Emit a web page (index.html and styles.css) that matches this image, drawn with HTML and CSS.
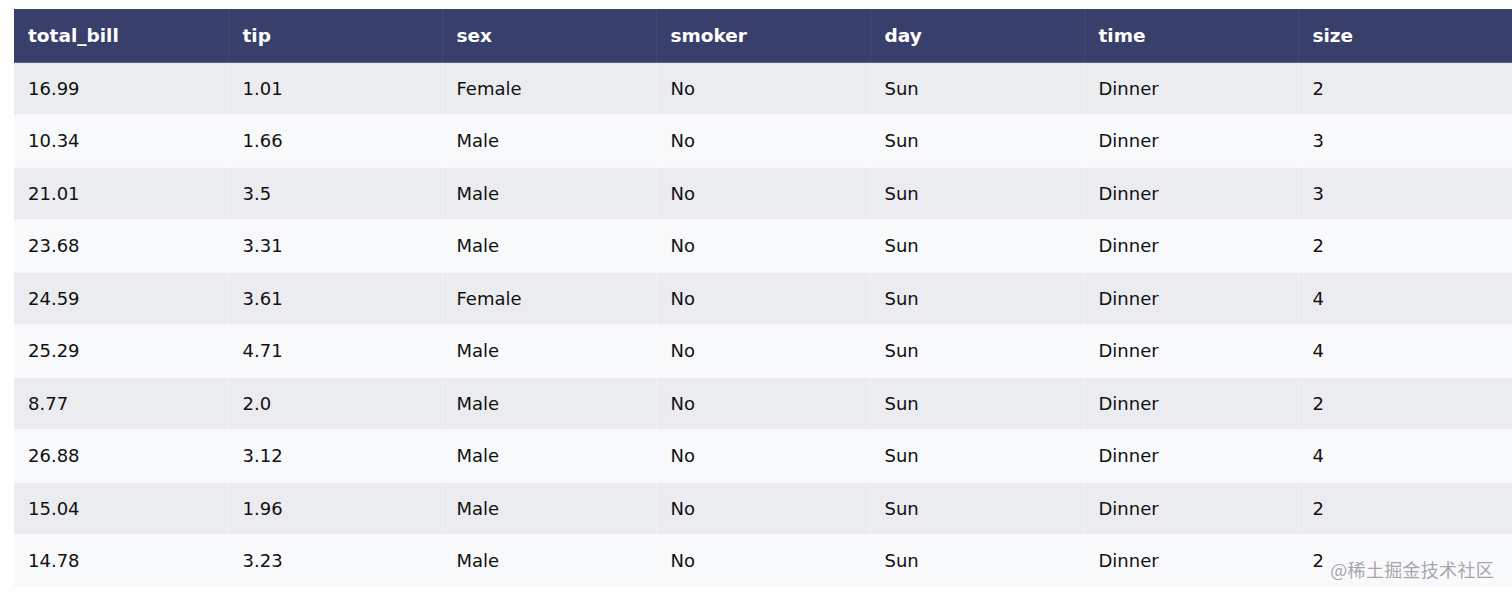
FILE: index.html
```html
<!DOCTYPE html>
<html>
<head>
<meta charset="utf-8">
<link rel="stylesheet" href="styles.css">
</head>
<body>
<div class="wrap">
<table class="data">
<thead>
<tr><th>total_bill</th><th>tip</th><th>sex</th><th>smoker</th><th>day</th><th>time</th><th>size</th></tr>
</thead>
<tbody>
<tr><td>16.99</td><td>1.01</td><td>Female</td><td>No</td><td>Sun</td><td>Dinner</td><td>2</td></tr>
<tr><td>10.34</td><td>1.66</td><td>Male</td><td>No</td><td>Sun</td><td>Dinner</td><td>3</td></tr>
<tr><td>21.01</td><td>3.5</td><td>Male</td><td>No</td><td>Sun</td><td>Dinner</td><td>3</td></tr>
<tr><td>23.68</td><td>3.31</td><td>Male</td><td>No</td><td>Sun</td><td>Dinner</td><td>2</td></tr>
<tr><td>24.59</td><td>3.61</td><td>Female</td><td>No</td><td>Sun</td><td>Dinner</td><td>4</td></tr>
<tr><td>25.29</td><td>4.71</td><td>Male</td><td>No</td><td>Sun</td><td>Dinner</td><td>4</td></tr>
<tr><td>8.77</td><td>2.0</td><td>Male</td><td>No</td><td>Sun</td><td>Dinner</td><td>2</td></tr>
<tr><td>26.88</td><td>3.12</td><td>Male</td><td>No</td><td>Sun</td><td>Dinner</td><td>4</td></tr>
<tr><td>15.04</td><td>1.96</td><td>Male</td><td>No</td><td>Sun</td><td>Dinner</td><td>2</td></tr>
<tr><td>14.78</td><td>3.23</td><td>Male</td><td>No</td><td>Sun</td><td>Dinner</td><td>2</td></tr>
</tbody>
</table>
<div class="watermark">@稀土掘金技术社区</div>
</div>
</body>
</html>
```
FILE: styles.css
```css
html, body {
  margin: 0;
  padding: 0;
  background: #ffffff;
  overflow: hidden;
}
body {
  padding: 9px 0 0 14px;
  font-family: "DejaVu Sans", Verdana, sans-serif;
}
.wrap {
  position: relative;
  width: 1498px;
}
.data {
  width: 1498px;
  border-collapse: collapse;
  table-layout: fixed;
}
.data th, .data td {
  text-align: left;
  padding: 0 14px;
  width: 214px;
  box-sizing: border-box;
  border-right: 1px solid rgba(255, 255, 255, 0.3);
}
.data th {
  background: #383f6b;
  color: #ffffff;
  font-weight: bold;
  font-size: 18.5px;
  height: 53px;
  border-right-color: rgba(255, 255, 255, 0.06);
  border-bottom: 1px solid #59608a;
}
.data td {
  font-size: 18px;
  color: #111111;
  height: 52.5px;
  border-bottom: 1px solid rgba(255, 255, 255, 0.6);
}
.data tbody tr:nth-child(odd) td {
  background: #ebecf0;
}
.data tbody tr:nth-child(even) td {
  background: #f8f9fb;
}
.watermark {
  position: absolute;
  right: 18px;
  bottom: 6px;
  font-family: "Noto Sans CJK SC", sans-serif;
  font-size: 18px;
  color: rgba(150, 150, 155, 0.85);
  letter-spacing: 0.3px;
}
```
